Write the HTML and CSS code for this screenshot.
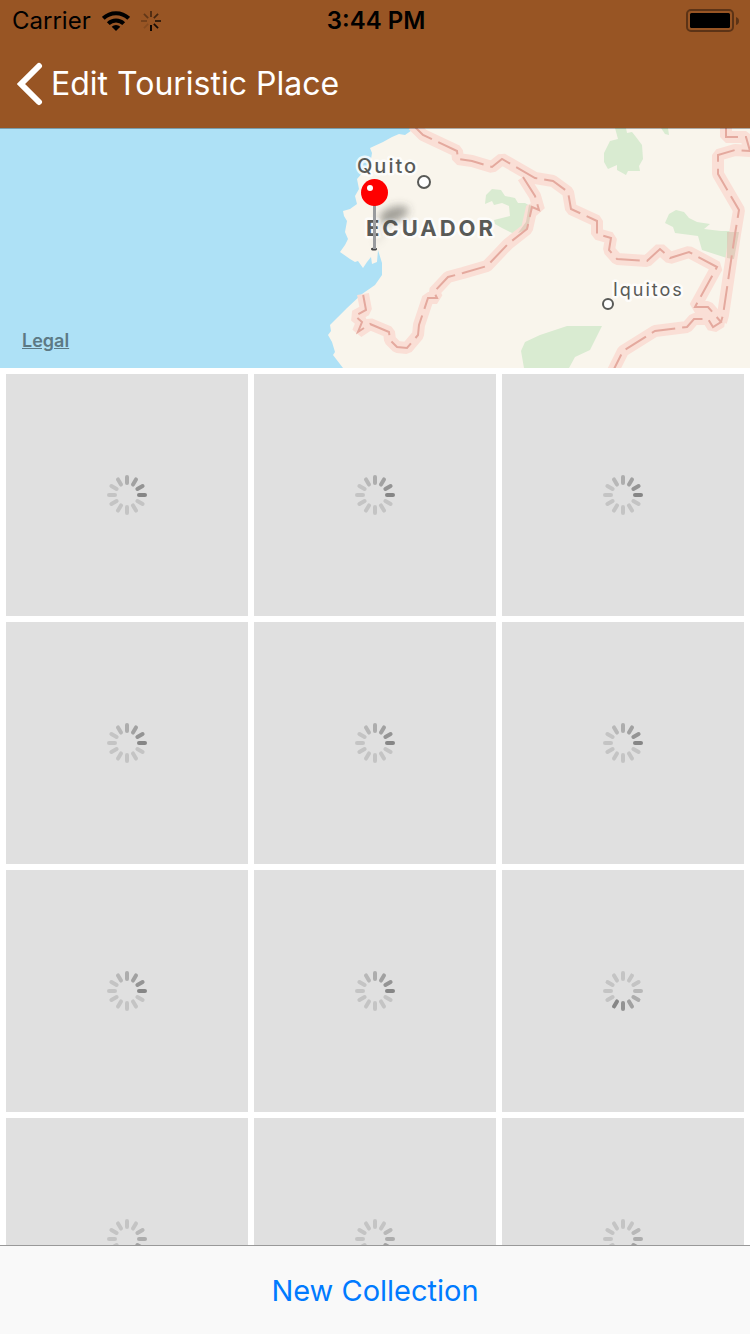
FILE: index.html
```html
<!DOCTYPE html>
<html lang="en">
<head>
<meta charset="utf-8">
<meta name="viewport" content="width=device-width, initial-scale=1">
<title>Edit Touristic Place</title>
<link rel="stylesheet" href="styles.css">
</head>
<body>
<svg class="defs" aria-hidden="true">
  <symbol id="spinner" viewBox="-20 -20 40 40">
    <g fill="none" stroke-width="4" stroke-linecap="round">
      <path stroke="#868686" d="M12 0H18"/>
      <path stroke="#949494" d="M12 0H18" transform="rotate(-30)"/>
      <path stroke="#a1a1a1" d="M12 0H18" transform="rotate(-60)"/>
      <path stroke="#adadad" d="M12 0H18" transform="rotate(-90)"/>
      <path stroke="#b8b8b8" d="M12 0H18" transform="rotate(-120)"/>
      <path stroke="#c4c4c4" d="M12 0H18" transform="rotate(-150)"/>
      <path stroke="#c4c4c4" d="M12 0H18" transform="rotate(180)"/>
      <path stroke="#c4c4c4" d="M12 0H18" transform="rotate(150)"/>
      <path stroke="#c4c4c4" d="M12 0H18" transform="rotate(120)"/>
      <path stroke="#c4c4c4" d="M12 0H18" transform="rotate(90)"/>
      <path stroke="#c4c4c4" d="M12 0H18" transform="rotate(60)"/>
      <path stroke="#c4c4c4" d="M12 0H18" transform="rotate(30)"/>
    </g>
  </symbol>
</svg>
<div class="app">
  <header class="header">
    <div class="status">
      <div class="status-left">
        <span>Carrier</span>
        <svg class="wifi" viewBox="0 0 28 20" aria-hidden="true">
          <path d="M14 20l-4.300-4.300a6.200 6.200 0 0 1 8.600 0z"/>
          <g fill="none" stroke="#000" stroke-width="4">
            <path d="M6.300 12.600a11 11 0 0 1 15.400 0"/>
            <path d="M1.300 7.400a18 18 0 0 1 25.400 0"/>
          </g>
        </svg>
        <svg class="activity" viewBox="-10 -10 20 20" aria-hidden="true">
          <g stroke="#000" stroke-width="1.800">
            <path d="M0 4V10"/>
            <path d="M0 4V10" transform="rotate(-45)" opacity=".85"/>
            <path d="M0 4V10" transform="rotate(-90)" opacity=".7"/>
            <path d="M0 4V10" transform="rotate(-135)" opacity=".55"/>
            <path d="M0 4V10" transform="rotate(180)" opacity=".5"/>
            <path d="M0 4V10" transform="rotate(135)" opacity=".35"/>
            <path d="M0 4V10" transform="rotate(90)" opacity=".25"/>
            <path d="M0 4V10" transform="rotate(45)" opacity=".12"/>
          </g>
        </svg>
      </div>
      <time class="clock">3:44 PM</time>
      <svg class="battery" viewBox="0 0 54 24" aria-hidden="true">
        <rect x="1" y="1" width="46" height="21" rx="4" fill="none" stroke="#5c3316" stroke-width="2"/>
        <rect x="4" y="4" width="40" height="15" rx="1.500"/>
        <path d="M50 8q3 1 3 4t-3 4z" fill="#5c3316"/>
      </svg>
    </div>
    <nav class="nav">
      <button class="back" type="button">
        <svg class="chevron" viewBox="0 0 26 44" aria-hidden="true"><path d="M22 4L4 22L22 40" fill="none" stroke="#fff" stroke-width="6" stroke-linecap="round" stroke-linejoin="miter"/></svg>
        <span>Edit Touristic Place</span>
      </button>
    </nav>
  </header>

  <section class="map" aria-label="Map">
    <svg class="map-art" viewBox="0 0 750 240" preserveAspectRatio="xMidYMid slice">
      <defs>
        <filter id="soft" x="-50%" y="-50%" width="200%" height="200%"><feGaussianBlur stdDeviation="4"/></filter>
        <path id="border-north" d="M413-3L423 7L457 23L458 31L472 33L492 39L502 31L535 50L553 53L568 64L571 81L597 93L597 106L611 110L609 122L617 131L647 133L660 121L670 130L689 124L717 139L695 179L708 179L721 194L713 199L708 191L694 191L687 199L655 203L623 223L613 243"/>
        <path id="border-south" d="M523 49L535 68L539 82L532 79L527 101L508 116L487 138L463 145L448 149L434 164L437 170L428 170L419 197L418 207L407 220L397 219L390 212L389 204L370 196L358 204L362 194L355 188L366 182L363 166"/>
        <path id="border-east" d="M726-3V9L746 9L750 23L735 22L718 27L718 46L739 82L735 106L723 187L721 194"/>
      </defs>
      <rect width="750" height="240" fill="#aee1f6"/>
      <path fill="#f9f5ec" d="M415 0L405 7L399 6L392 9L383 14L370 20L372 25L371 31L365 42L357 51L359 61L355 68L357 76L350 81L343 83L344 88L347 93L345 104L348 111L345 117L340 124L350 131L355 134L358 133L363 140L367 134L371 129L372 136L377 134L378 122L382 135L382 147L375 157L362 166L347 180L338 189L330 197L331 203L328 207L332 214L335 224L333 227L343 240H750V0Z"/>
      <g fill="#d9ebd1">
        <path d="M486 67L492 61L501 62L505 68L515 70L518 75L525 75L532 79L527 101L514 106L502 100L495 96L494 92L510 88L509 78L502 75L494 77L492 73L485 76Z"/>
        <path d="M615 0H626L627 5L632 4L636 9L642 17L643 31L639 38L640 43H628L626 47L617 42V37L608 41L604 34L604 25L610 13L618 11Z"/>
        <path d="M661 0H668L669 7L665 6Z"/>
        <path d="M665 95L669 86L676 82L684 84L689 90L697 94L710 96L704 101L721 103H739L733 132L702 122L698 108L675 105L673 99Z"/>
        <path d="M521 223L525 214L540 207L567 198H602L590 222L575 229L569 240H524Z"/>
      </g>
      <g fill="none" stroke-linejoin="bevel" stroke="#fadfd6" stroke-width="12">
        <use href="#border-north"/><use href="#border-south"/><use href="#border-east"/>
      </g>
      <path fill="#d9c8b3" opacity=".7" d="M529 77L532 78L528 101L518 105L526 94ZM727 104H739L734 131L727 130Z"/>
      <g fill="none" stroke="#e4a99e" stroke-width="2" stroke-dasharray="24 7">
        <use href="#border-north"/><use href="#border-south"/><use href="#border-east"/>
      </g>
      <g fill="#fff" stroke="#595a57" stroke-width="2"><circle cx="424" cy="54" r="6"/><circle cx="608" cy="176" r="5"/></g>
      <g class="label">
        <text class="city-large" x="357" y="45">Quito</text>
        <text class="country" x="366" y="108">ECUADOR</text>
        <text class="city" x="613" y="168">Iquitos</text>
      </g>
      <g filter="url(#soft)" fill="#47483f">
        <ellipse cx="394" cy="86" rx="15" ry="7" opacity=".5" transform="rotate(-18 394 86)"/>
        <path d="M375 119L385 91L391 88Z" opacity=".3"/>
      </g>
      <ellipse cx="374" cy="121" rx="3" ry="1.500" fill="#444"/>
      <path d="M374.500 77V121" stroke="#999b9e" stroke-width="3"/>
      <circle cx="374.500" cy="64.500" r="13.500" fill="#f00"/>
      <circle cx="370" cy="60" r="3" fill="#fff"/>
      <path d="M0 .5H750" stroke="#000" stroke-opacity=".3"/>
    </svg>
    <a class="legal" href="#legal">Legal</a>
  </section>

  <main class="photos">
    <div class="photo"><svg class="spinner"><use href="#spinner"/></svg></div>
    <div class="photo"><svg class="spinner"><use href="#spinner"/></svg></div>
    <div class="photo"><svg class="spinner"><use href="#spinner"/></svg></div>
    <div class="photo"><svg class="spinner"><use href="#spinner"/></svg></div>
    <div class="photo"><svg class="spinner"><use href="#spinner"/></svg></div>
    <div class="photo"><svg class="spinner"><use href="#spinner"/></svg></div>
    <div class="photo"><svg class="spinner"><use href="#spinner"/></svg></div>
    <div class="photo"><svg class="spinner"><use href="#spinner"/></svg></div>
    <div class="photo"><svg class="spinner phase-late"><use href="#spinner"/></svg></div>
    <div class="photo"><svg class="spinner phase-quarter"><use href="#spinner"/></svg></div>
    <div class="photo"><svg class="spinner phase-quarter"><use href="#spinner"/></svg></div>
    <div class="photo"><svg class="spinner phase-quarter"><use href="#spinner"/></svg></div>
  </main>

  <footer class="toolbar">
    <button class="new-collection" type="button">New Collection</button>
  </footer>
</div>
</body>
</html>
```
FILE: styles.css
```css
* { box-sizing: border-box; }

body {
  margin: 0;
  background: #fff;
  font-family: Inter, "Liberation Sans", sans-serif;
}

button {
  border: 0;
  padding: 0;
  background: none;
  font: inherit;
  cursor: pointer;
}

svg { display: block; }

.defs { position: absolute; width: 0; height: 0; }

.app {
  display: flex;
  flex-direction: column;
  height: 100vh;
}

.header { flex: none; background: #985524; }

.status {
  display: grid;
  grid-template-columns: 1fr auto 1fr;
  align-items: center;
  height: 40px;
  padding: 2px 10px 0 12px;
  font-size: 24px;
  line-height: 38px;
  color: #000;
}

.status-left { display: flex; align-items: center; gap: 11px; }
.wifi { width: 28px; height: 20px; }
.activity { width: 20px; height: 20px; }
.clock { font-weight: 600; }
.battery { width: 54px; height: 24px; justify-self: end; }

.nav { display: flex; align-items: center; height: 88px; padding: 0 17px; }

.back {
  display: flex;
  align-items: center;
  gap: 8px;
  font-size: 32px;
  line-height: 44px;
  color: #fff;
}

.chevron { width: 26px; height: 44px; }

.map { flex: none; position: relative; height: 240px; }
.map-art { width: 100%; height: 100%; }

.label {
  fill: #595a57;
  stroke: #fff;
  stroke-width: 5px;
  stroke-opacity: .8;
  stroke-linejoin: round;
  paint-order: stroke;
}

.city-large { font-size: 20px; font-weight: 500; letter-spacing: 2px; }
.city { font-size: 18px; letter-spacing: 2px; }
.country { font-size: 22px; font-weight: 700; letter-spacing: 3px; }

.legal {
  position: absolute;
  left: 22px;
  bottom: 16px;
  font-size: 18px;
  line-height: 22px;
  font-weight: 600;
  color: #5c7984;
}

.photos {
  flex: 1;
  min-height: 0;
  overflow-y: auto;
  scrollbar-width: none;
  display: grid;
  grid-template-columns: repeat(3, 1fr);
  align-content: start;
  gap: 6px;
  padding: 6px;
}

.photo {
  display: grid;
  place-items: center;
  aspect-ratio: 1;
  background: #e0e0e0;
}

.spinner { width: 40px; height: 40px; }
.phase-quarter { transform: rotate(90deg); }
.phase-late { transform: rotate(120deg); }

.toolbar {
  flex: none;
  display: flex;
  justify-content: center;
  align-items: center;
  height: 89px;
  padding-top: 2px;
  border-top: 1px solid #999;
  background: #f9f9f9;
}

.new-collection { font-size: 29px; line-height: 44px; color: #007aff; }
```
